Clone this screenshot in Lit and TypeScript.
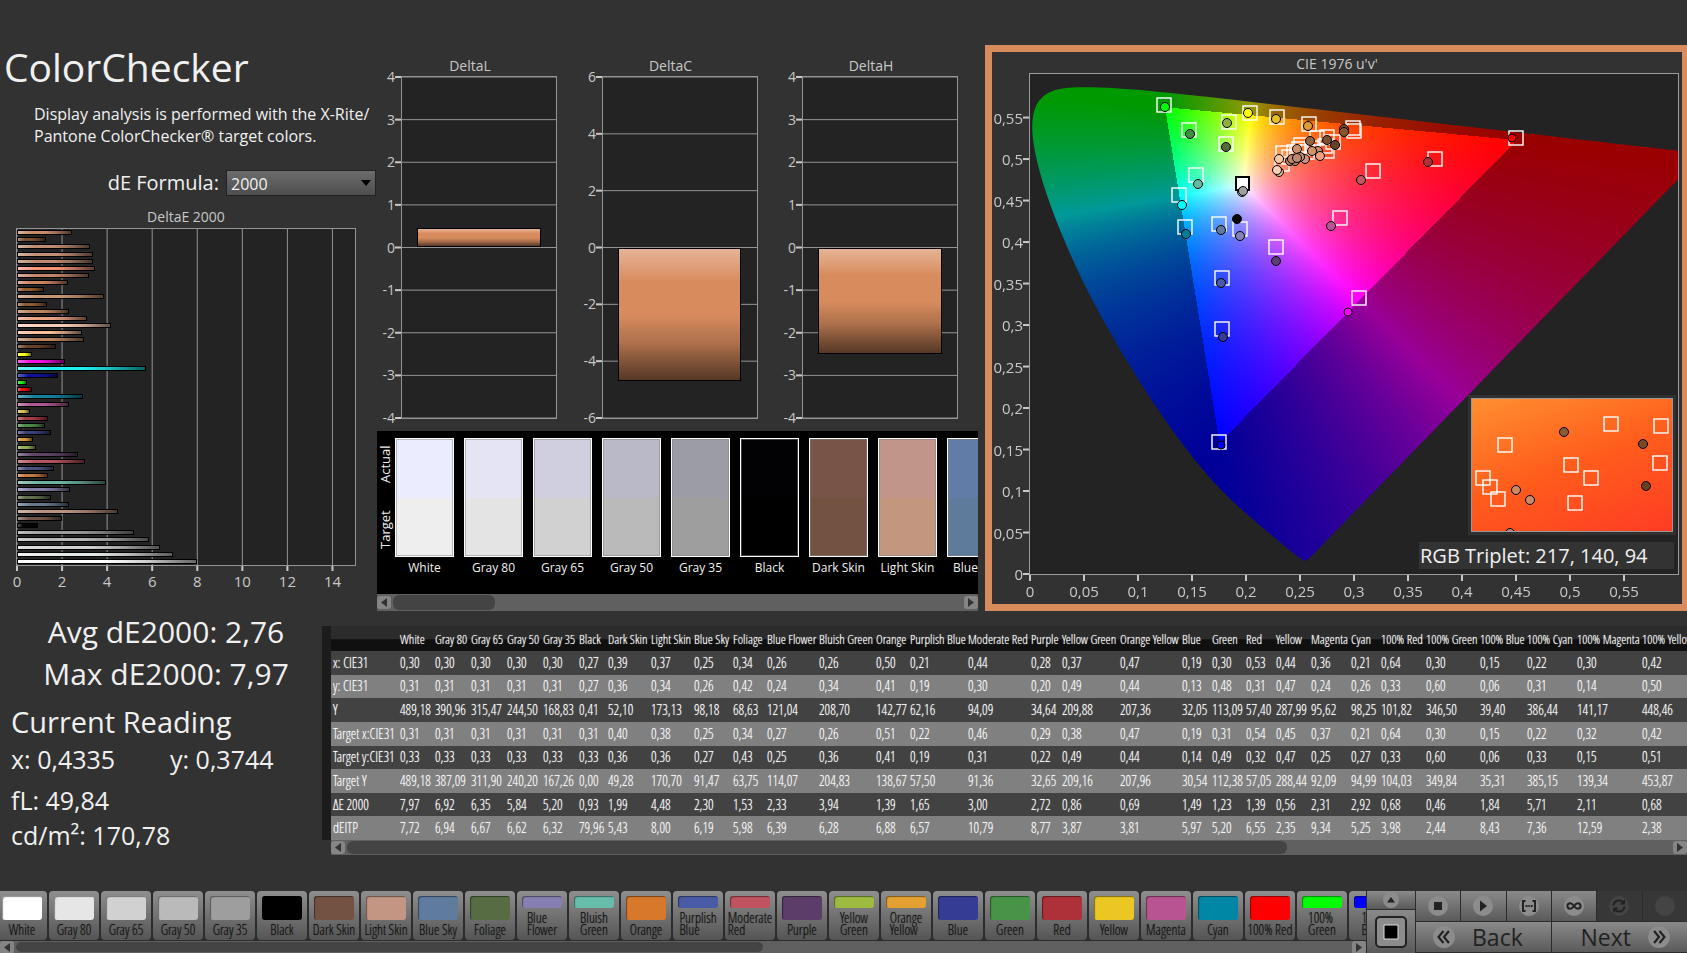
import { LitElement, html, svg, css } from "lit";
import { customElement, property } from "lit/decorators.js";
import { styleMap } from "lit/directives/style-map.js";
import { classMap } from "lit/directives/class-map.js";

interface Patch {
  name: string;
  color: string;
  width: number;
  values: string[];
}

const ROWS = ["x: CIE31", "y: CIE31", "Y", "Target x:CIE31", "Target y:CIE31", "Target Y", "ΔE 2000", "dEITP"];

const patch = (name: string, color: string, width: number, values: string): Patch => ({
  name, color, width, values: values.split(" "),
});

const PATCHES: Patch[] = [
  patch("White", "#ffffff", 35, "0,30 0,31 489,18 0,31 0,33 489,18 7,97 7,72"),
  patch("Gray 80", "#e6e6e6", 36, "0,30 0,31 390,96 0,31 0,33 387,09 6,92 6,94"),
  patch("Gray 65", "#d1d1d1", 36, "0,30 0,31 315,47 0,31 0,33 311,90 6,35 6,67"),
  patch("Gray 50", "#bababa", 36, "0,30 0,31 244,50 0,31 0,33 240,20 5,84 6,62"),
  patch("Gray 35", "#9e9e9e", 36, "0,30 0,31 168,83 0,31 0,33 167,26 5,20 6,32"),
  patch("Black", "#000000", 29, "0,27 0,27 0,41 0,31 0,33 0,00 0,93 79,96"),
  patch("Dark Skin", "#735244", 43, "0,39 0,36 52,10 0,40 0,36 49,28 1,99 5,43"),
  patch("Light Skin", "#c29682", 43, "0,37 0,34 173,13 0,38 0,36 170,70 4,48 8,00"),
  patch("Blue Sky", "#5f7b9e", 39, "0,25 0,26 98,18 0,25 0,27 91,47 2,30 6,19"),
  patch("Foliage", "#576c43", 34, "0,34 0,42 68,63 0,34 0,43 63,75 1,53 5,98"),
  patch("Blue Flower", "#8580b1", 52, "0,26 0,24 121,04 0,27 0,25 114,07 2,33 6,39"),
  patch("Bluish Green", "#67bdaa", 57, "0,26 0,34 208,70 0,26 0,36 204,83 3,94 6,28"),
  patch("Orange", "#d8782a", 34, "0,50 0,41 142,77 0,51 0,41 138,67 1,39 6,88"),
  patch("Purplish Blue", "#4a5ba5", 58, "0,21 0,19 62,16 0,22 0,19 57,50 1,65 6,57"),
  patch("Moderate Red", "#c15260", 63, "0,44 0,30 94,09 0,46 0,31 91,36 3,00 10,79"),
  patch("Purple", "#5c3d6a", 31, "0,28 0,20 34,64 0,29 0,22 32,65 2,72 8,77"),
  patch("Yellow Green", "#9dbb41", 58, "0,37 0,49 209,88 0,38 0,49 209,16 0,86 3,87"),
  patch("Orange Yellow", "#e4a030", 62, "0,47 0,44 207,36 0,47 0,44 207,96 0,69 3,81"),
  patch("Blue", "#343d93", 30, "0,19 0,13 32,05 0,19 0,14 30,54 1,49 5,97"),
  patch("Green", "#479449", 34, "0,30 0,48 113,09 0,31 0,49 112,38 1,23 5,20"),
  patch("Red", "#ae3039", 30, "0,53 0,31 57,40 0,54 0,32 57,05 1,39 6,55"),
  patch("Yellow", "#ebc723", 35, "0,44 0,47 287,99 0,45 0,47 288,44 0,56 2,35"),
  patch("Magenta", "#b95492", 40, "0,36 0,24 95,62 0,37 0,25 92,09 2,31 9,34"),
  patch("Cyan", "#0087a5", 30, "0,21 0,26 98,25 0,21 0,27 94,99 2,92 5,25"),
  patch("100% Red", "#ff0000", 45, "0,64 0,33 101,82 0,64 0,33 104,03 0,68 3,98"),
  patch("100% Green", "#00ff00", 54, "0,30 0,60 346,50 0,30 0,60 349,84 0,46 2,44"),
  patch("100% Blue", "#0000ff", 47, "0,15 0,06 39,40 0,15 0,06 35,31 1,84 8,43"),
  patch("100% Cyan", "#00ffff", 50, "0,22 0,31 386,44 0,22 0,33 385,15 5,71 7,36"),
  patch("100% Magenta", "#ff00ff", 65, "0,30 0,14 141,17 0,32 0,15 139,34 2,11 12,59"),
  patch("100% Yellow", "#ffff00", 65, "0,42 0,50 448,46 0,42 0,51 453,87 0,68 2,38"),
];

/* Names wider than this table column take two lines on a tile */
const ONE_LINE_LIMIT = 46;

const DELTA_E: Array<[number, string]> = [
  [2.44, "#c58a68"], [1.3, "#7a4e30"], [3.25, "#bd8b70"], [3.37, "#c08f74"], [3.37, "#b98a6c"],
  [3.47, "#f39276"], [3.2, "#c38668"], [2.28, "#c9875f"], [1.18, "#94592b"], [3.87, "#c4966f"],
  [1.35, "#8a5c38"], [2.32, "#ba8660"], [3.12, "#eba184"], [4.18, "#fbccb4"], [2.89, "#f8c09a"],
  [2.99, "#b98560"], [1.71, "#6a4028"], [0.68, "#ffff20"], [2.11, "#f010e0"], [5.71, "#20f0f0"],
  [1.84, "#10109c"], [0.46, "#20e820"], [0.68, "#e01010"], [2.92, "#12809a"], [2.31, "#ae5a92"],
  [0.56, "#d8be58"], [1.39, "#a83a42"], [1.23, "#4a8a4c"], [1.49, "#3a4078"], [0.69, "#d8963a"],
  [0.86, "#94ac5a"], [2.72, "#5f4468"], [3.0, "#b4525e"], [1.65, "#4a5484"], [1.39, "#c47a44"],
  [3.94, "#6cb09e"], [2.33, "#8680a8"], [1.53, "#5f6e4c"], [2.3, "#66788e"], [4.48, "#b8907c"],
  [1.99, "#72564c"], [0.93, "#050505"], [5.2, "#9a9a9a"], [5.84, "#b6b6b6"], [6.35, "#d2d0d2"],
  [6.92, "#e4e8e6"], [7.97, "#ffffff"],
];

const PLOT_W = 648;
const PLOT_H = 500;
const U_MAX = 0.6;
const V_MAX = 0.6025;

const TARGETS: Array<[number, number]> = [
  [134, 31], [159, 56], [199, 48], [196, 70], [220, 39], [247, 43], [279, 50], [166, 101],
  [149, 121], [155, 153], [189, 150], [210, 155], [246, 173], [192, 204], [192, 255], [189, 368],
  [486, 64], [405, 85], [343, 97], [310, 144], [329, 224], [323, 54], [324, 57], [303, 68],
  [297, 63], [287, 64], [271, 71], [253, 79], [252, 90], [259, 83], [264, 78], [269, 75],
  [277, 78], [282, 74], [297, 77], [295, 72],
];

const READINGS: Array<[number, number, string, number?]> = [
  [135, 33, "#00ff00"], [160, 60, "#3f9142"], [197, 49, "#8fae3e"], [196, 73, "#566b3a"],
  [218, 39, "#ffff00"], [246, 45, "#e5c020"], [278, 52, "#dd9e2f"], [168, 110, "#65baa4"],
  [152, 131, "#00ffff"], [156, 160, "#008099"], [191, 156, "#5f7ba0"], [210, 162, "#8580b5"],
  [246, 187, "#5c3f70"], [191, 209, "#4a5aa8"], [193, 263, "#343d97"], [191, 371, "#0000ff", 4],
  [212, 118, "#d0d0d0"], [213, 117, "#a0a0a0"], [207, 145, "#000000"], [482, 64, "#ff0000", 4],
  [398, 88, "#b03038"], [331, 106, "#c25664"], [301, 152, "#b9569a"], [318, 238, "#ff00ff", 4],
  [314, 55, "#7a4a24"], [314, 58, "#8a5528"], [280, 67, "#94643c"], [297, 66, "#7b5030"],
  [305, 71, "#6a4028"], [267, 75, "#c9946c"], [288, 77, "#c98b62"], [282, 77, "#d0936b"],
  [290, 82, "#f0a080"], [275, 85, "#d0927a"], [270, 83, "#c89078"], [260, 87, "#b88468"],
  [265, 87, "#b88468"], [262, 85, "#c08a70"], [267, 84, "#c08a70"], [249, 85, "#f8c8a4"],
  [249, 98, "#e8b898"], [247, 96, "#f8d0b8"],
];

const INSET_TARGETS: Array<[number, number]> = [
  [33, 46], [139, 25], [189, 27], [99, 66], [188, 64], [119, 79], [11, 79], [18, 88], [26, 100], [103, 104],
];

const INSET_READINGS: Array<[number, number, string]> = [
  [92, 33, "#8a5c34"], [171, 45, "#774b29"], [174, 87, "#6a3f24"], [44, 91, "#cc8a62"],
  [58, 101, "#c98b68"], [38, 134, "#c08060"],
];

/* Spectral locus, CIE 1931 x,y */
const LOCUS: Array<[number, number]> = [
  [0.1741, 0.005], [0.1733, 0.0048], [0.1714, 0.0051], [0.1689, 0.0069], [0.1644, 0.0109],
  [0.1566, 0.0177], [0.144, 0.0297], [0.1355, 0.0399], [0.1241, 0.0578], [0.1096, 0.0868],
  [0.0913, 0.1327], [0.0687, 0.2007], [0.0454, 0.295], [0.0235, 0.4127], [0.0082, 0.5384],
  [0.0039, 0.6548], [0.0139, 0.7502], [0.0389, 0.812], [0.0743, 0.8338], [0.1142, 0.8262],
  [0.1547, 0.8059], [0.1929, 0.7816], [0.2296, 0.7543], [0.3016, 0.6923], [0.3731, 0.6245],
  [0.4441, 0.5547], [0.5125, 0.4866], [0.5752, 0.4242], [0.627, 0.3725], [0.6658, 0.334],
  [0.6915, 0.3083], [0.719, 0.2809], [0.7347, 0.2653],
];

const pct = (value: number, total: number) => `${(value / total) * 100}%`;
const comma = (value: number) => String(Math.round(value * 100) / 100).replace(".", ",");
const barFill = (direction: string, color: string) =>
  `linear-gradient(${direction}, color-mix(in srgb, ${color} 65%, #fff), ${color} 25%, ${color} 50%, color-mix(in srgb, ${color} 80%, #000) 72%, color-mix(in srgb, ${color} 40%, #000))`;

const drawMarkers = (
  targets: Array<[number, number]>,
  readings: Array<[number, number, string, number?]>,
  width: number,
  height: number,
) => svg`
  ${targets.map(([x, y]) => svg`<rect class="target" x=${pct(x, width)} y=${pct(y, height)} width="14" height="14" transform="translate(-7 -7)"></rect>`)}
  ${readings.map(([x, y, color, r]) => svg`<circle class="reading" cx=${pct(x, width)} cy=${pct(y, height)} r=${r ?? 4.5} fill=${color}></circle>`)}
`;

@customElement("scroll-strip")
class ScrollStrip extends LitElement {
  @property({ type: Number }) extent = 20;

  static styles = css`
    :host { display: flex; align-items: center; background: #606060; height: 15px; }
    .arrow { display: grid; place-items: center; width: 14px; height: 13px; padding: 0; border: 0; border-radius: 3px; background: #858585; flex: none; }
    .arrow svg { width: 6px; height: 9px; fill: #333; }
    .track { flex: 1; height: 100%; margin: 0 2px; padding: 1px 0; box-sizing: border-box; }
    .thumb { height: 100%; border-radius: 6px; background: #444; }
  `;

  render() {
    return html`
      <button class="arrow" aria-label="Scroll left"><svg viewBox="0 0 6 9"><path d="M6 0v9L0 4.5z"/></svg></button>
      <div class="track"><div class="thumb" style=${styleMap({ width: `${this.extent}%` })}></div></div>
      <button class="arrow" aria-label="Scroll right"><svg viewBox="0 0 6 9"><path d="M0 0v9l6-4.5z"/></svg></button>
    `;
  }
}

@customElement("delta-chart")
class DeltaChart extends LitElement {
  @property() heading = "";
  @property({ type: Number }) limit = 4;
  @property({ type: Number }) step = 1;
  @property({ type: Number }) value = 0;

  static styles = css`
    :host { display: block; color: #c8c8c8; font-size: 14px; }
    .title { margin: 0 0 0 -18px; font-size: 14px; font-weight: 400; line-height: 20px; text-align: center; }
    .plot { position: relative; height: 343px; border: 1px solid #949494; background: #232323; box-sizing: border-box; }
    .axes { display: block; width: 100%; height: 100%; overflow: visible; }
    .axes text { fill: #c8c8c8; text-anchor: end; }
    .grid { stroke: #949494; stroke-width: 1; }
    .tick { stroke: #c8c8c8; stroke-width: 2; }
    .bar { position: absolute; left: 10%; width: 80%; border: 1px solid #000; box-sizing: border-box; }
  `;

  render() {
    const ticks: number[] = [];
    for (let t = this.limit; t >= -this.limit; t -= this.step) ticks.push(t);
    const top = 50 - (Math.max(this.value, 0) / this.limit) * 50;
    const size = (Math.abs(this.value) / this.limit) * 50;
    return html`
      <h3 class="title">${this.heading}</h3>
      <div class="plot">
        <svg class="axes">
          ${ticks.map((t) => {
            const y = `${50 - (t / this.limit) * 50}%`;
            return svg`
              <line class="grid" x1="0" x2="100%" y1=${y} y2=${y}></line>
              <line class="tick" x1="-7" x2="-1" y1=${y} y2=${y}></line>
              <text x="-7" y=${y} dy="5">${t}</text>`;
          })}
        </svg>
        <div class="bar" style=${styleMap({ top: `${top}%`, height: `${size}%`, background: barFill("180deg", "#d88c5e") })}></div>
      </div>
    `;
  }
}

@customElement("chroma-plot")
class ChromaPlot extends LitElement {
  static styles = css`
    :host { display: block; border: 7px solid #d88c5e; border-right-width: 5px; padding: 0 4px 30px 38px; color: #c8c8c8; background: #323232; }
    .title { margin: 0 0 0 -34px; font-size: 14px; font-weight: 400; line-height: 24px; height: 22px; text-align: center; }
    .plot { position: relative; height: 500px; background: #232323; outline: 1px solid #9a9a9a; }
    .gamut { display: block; width: 100%; height: 100%; }
    .marks { position: absolute; inset: 0; width: 100%; height: 100%; overflow: visible; }
    .axis { fill: #c8c8c8; font-size: 15px; }
    .vertical { text-anchor: end; }
    .horizontal { text-anchor: middle; }
    .tick { stroke: #c8c8c8; stroke-width: 2; }
    .target { fill: none; stroke: #fff; stroke-width: 1.4; }
    .white { fill: #fff; stroke: #000; stroke-width: 2; }
    .reading { stroke: #000; stroke-width: 1; }
    .inset { position: absolute; right: 5px; bottom: 42px; width: 200px; height: 132px; border: 1px solid #999; outline: 3px solid #303030; overflow: hidden;
      background: linear-gradient(160deg, #ff8f30, #ff5c1c 50%, #ff3c24); }
    .inset svg { display: block; width: 100%; height: 100%; }
    .triplet { position: absolute; right: 4px; bottom: 5px; width: 255px; padding: 0 1px; box-sizing: border-box; background: #333; color: #f0f0f0; font-size: 20px; line-height: 27px; }
  `;

  firstUpdated() {
    const canvas = this.renderRoot.querySelector("canvas") as HTMLCanvasElement;
    const w = Math.max(canvas.clientWidth, 100);
    const h = Math.max(canvas.clientHeight, 100);
    canvas.width = w;
    canvas.height = h;
    const layer = document.createElement("canvas");
    layer.width = w;
    layer.height = h;
    const ctx = layer.getContext("2d")!;
    const image = ctx.createImageData(w, h);
    for (let j = 0; j < h; j++) {
      for (let i = 0; i < w; i++) {
        const u = ((i + 0.5) / w) * U_MAX;
        const v = Math.max((1 - (j + 0.5) / h) * V_MAX, 0.002);
        const X = (9 * u) / (4 * v);
        const Z = (12 - 3 * u - 20 * v) / (4 * v);
        const rgb = [
          3.2406 * X - 1.5372 - 0.4986 * Z,
          -0.9689 * X + 1.8758 + 0.0415 * Z,
          0.0557 * X - 0.204 + 1.057 * Z,
        ];
        const level = Math.min(...rgb) >= 0 ? 255 : 153;
        const peak = Math.max(...rgb);
        const at = (j * w + i) * 4;
        rgb.forEach((c, k) => { image.data[at + k] = (level * Math.max(c, 0)) / peak; });
        image.data[at + 3] = 255;
      }
    }
    ctx.putImageData(image, 0, 0);

    const out = canvas.getContext("2d")!;
    const points = LOCUS.map(([x, y]) => {
      const d = -2 * x + 12 * y + 3;
      return [((4 * x) / d / U_MAX) * w, (1 - (9 * y) / d / V_MAX) * h];
    });
    out.beginPath();
    out.moveTo(points[0][0], points[0][1]);
    for (let i = 1; i < points.length - 1; i++) {
      const [x, y] = points[i];
      const [nx, ny] = points[i + 1];
      out.quadraticCurveTo(x, y, (x + nx) / 2, (y + ny) / 2);
    }
    const last = points[points.length - 1];
    out.lineTo(last[0], last[1]);
    out.closePath();
    out.fillStyle = out.createPattern(layer, "no-repeat")!;
    out.fill();
  }

  render() {
    const steps = Array.from({ length: 12 }, (_, i) => i * 0.05);
    return html`
      <h3 class="title">CIE 1976 u'v'</h3>
      <div class="plot">
        <canvas class="gamut"></canvas>
        <svg class="marks">
          ${steps.map((s) => {
            const x = pct(s, U_MAX);
            const y = pct(V_MAX - s, V_MAX);
            return svg`
              <line class="tick" x1="-7" x2="-1" y1=${y} y2=${y}></line>
              <text class="axis vertical" x="-7" y=${y} dy="6">${comma(s)}</text>
              <svg x=${x} y="100%" overflow="visible">
                <line class="tick" y1="1" y2="7"></line>
                <text class="axis horizontal" y="23">${comma(s)}</text>
              </svg>`;
          })}
          ${drawMarkers(TARGETS, [], PLOT_W, PLOT_H)}
          <rect class="white" x=${pct(213, PLOT_W)} y=${pct(110, PLOT_H)} width="13" height="13" transform="translate(-7 -7)"></rect>
          ${drawMarkers([], READINGS, PLOT_W, PLOT_H)}
        </svg>
        <div class="inset"><svg>${drawMarkers(INSET_TARGETS, INSET_READINGS, 200, 132)}</svg></div>
        <div class="triplet">RGB Triplet: 217, 140, 94</div>
      </div>
    `;
  }
}

@customElement("app-root")
class AppRoot extends LitElement {
  static styles = css`
    :host { display: flex; flex-direction: column; min-height: 100vh; overflow: hidden; box-sizing: border-box; padding-top: 45px;
      background: #323232; color: #f0f0f0; font-family: "Open Sans", "Noto Sans", sans-serif; }
    h1, h2, p { margin: 0; font-weight: 400; }
    .upper { display: grid; grid-template-columns: 376px 602px minmax(0, 1fr); }
    .side { padding-right: 20px; }
    .heading { padding-left: 4px; font-size: 39px; line-height: 44px; }
    .about { margin-top: 14px; padding-left: 34px; font-size: 16px; line-height: 22px; white-space: nowrap; }
    .formula { display: flex; justify-content: flex-end; align-items: center; gap: 7px; margin: 22px -20px 0 0; font-size: 20px; line-height: 28px; }
    .select { width: 150px; height: 26px; padding: 2px 4px 0; border: 1px solid #222; border-radius: 0; appearance: none; color: #f0f0f0; font: 16px "Open Sans", sans-serif;
      background: linear-gradient(#6c6c6c, #4e4e4e); }
    .picker { position: relative; display: flex; }
    .caret { position: absolute; right: 5px; top: 10px; width: 10px; height: 6px; fill: #000; pointer-events: none; }
    .bars-title { margin: 10px 0 0 16px; color: #c8c8c8; font-size: 14px; line-height: 20px; text-align: center; }
    .bars { position: relative; height: 338px; margin: 1px 0 0 16px; border: 1px solid #949494; background: #232323; box-sizing: border-box; }
    .bars-axes { position: absolute; inset: 0; width: 100%; height: 100%; overflow: visible; }
    .bars-axes text { fill: #c8c8c8; font-size: 15px; text-anchor: middle; }
    .grid { stroke: #949494; stroke-width: 1; }
    .tick { stroke: #c8c8c8; stroke-width: 2; }
    .bar-list { position: relative; display: grid; grid-template-rows: repeat(47, 1fr); align-items: center; height: 100%; }
    .bar { height: 5px; border: 1px solid #000; box-sizing: border-box; }

    .middle { padding: 11px 0 0; display: flex; flex-direction: column; }
    .deltas { display: grid; grid-template-columns: repeat(3, 156px); justify-content: space-between; padding: 0 20px 0 25px; }
    .compare { display: flex; height: 163px; margin: 12px 0 0 1px; background: #000; font-size: 12px; overflow: hidden; box-sizing: border-box; }
    .compare-axis { display: flex; flex-direction: row-reverse; justify-content: space-around; flex: none; height: 132px; width: 18px; writing-mode: vertical-rl; transform: rotate(180deg); text-align: center; line-height: 17px; font-size: 13px; }
    .compare-list { display: flex; gap: 10px; padding-top: 7px; }
    .compare-item { flex: none; width: 59px; text-align: center; line-height: 22px; white-space: nowrap; }
    .pair { display: grid; grid-template-rows: 1fr 1fr; height: 119px; border: 1px solid #fff; box-sizing: border-box; outline: 1px solid rgba(128,128,128,.5); outline-offset: -2px; }
    .strip-scroll { margin-left: 1px; height: 17px; }
    .gamut-panel { margin-left: 7px; }

    .lower { display: grid; grid-template-columns: 322px minmax(0, 1fr); align-items: start; }
    .stats { padding-right: 8px; }
    .stat { font-size: 30px; line-height: 42px; padding-left: 18px; text-align: center; }
    .reading-title { margin-top: 7px; padding-left: 11px; font-size: 29px; line-height: 40px; }
    .line { display: flex; padding-left: 11px; font-size: 25px; line-height: 35px; }
    .line.first { margin-bottom: 6px; }
    .line span { flex: 0 0 159px; white-space: nowrap; }
    .data { margin-top: 15px; min-width: 0; overflow: hidden; }
    .table { width: 1385px; height: 214px; table-layout: fixed; border-collapse: separate; border-spacing: 0; border-left: 9px solid #1c1c1c; color: #fff; text-shadow: 0 0 1px #c0c0c0;
      font: 14px "Open Sans Condensed Light", "Noto Sans Condensed", "Liberation Sans Narrow", "Open Sans", sans-serif; }
    .table th, .table td { padding: 0; font-weight: 400; text-align: left; white-space: nowrap; line-height: 20px; }
    .table thead th { height: 25px; font-size: 13px; }
    .table thead { background: linear-gradient(#2c2c2c 50%, #101010 55%); }
    .table tbody tr { background: #424242; }
    .table tbody tr:nth-child(even) { background: #808080; }
    .table tbody th { padding-left: 2px; }
    .data-scroll { margin-left: 9px; }

    .dock { display: grid; grid-template-columns: minmax(0, 1fr) 48px 271px; column-gap: 1px; height: 62px; margin-top: auto; background: #2c2c2c; }
    .tiles { display: flex; flex-direction: column; overflow: hidden; }
    .tile-row { display: flex; gap: 2px; margin-left: -3px; height: 49px; }
    .tile { flex: none; display: flex; flex-direction: column; align-items: center; width: 50px; height: 49px; padding: 5px 0 4px; border: 0; border-radius: 4px; background: linear-gradient(#8e8e8e, #555); color: #101010; overflow: hidden; white-space: nowrap;
      text-shadow: 0 0 1px #303030; font: 14px/12px "Open Sans Condensed Light", "Noto Sans Condensed", "Liberation Sans Narrow", "Open Sans", sans-serif; }
    .two-line { width: min-content; white-space: normal; text-align: left; }
    .chip { flex: 1; width: 40px; min-height: 12px; margin-bottom: 4px; border-radius: 3px; box-shadow: inset 1px 1px 1px rgba(0,0,0,.45); }
    .tile-scroll { height: 12px; margin-top: 1px; }
    .window { display: grid; grid-template-rows: 18px 1fr; gap: 1px; }
    .ctl { display: flex; align-items: center; justify-content: center; padding: 0; border: 0; background: linear-gradient(#8a8a8a, #5a5a5a); color: #222; font: 23px "Open Sans", sans-serif; }
    .ctl.off { background: #373737; }
    .ctl svg { width: 22px; height: 22px; }
    .knob { fill: #8c8c8c; }
    .off .knob { fill: #444; }
    .ink { fill: #222; }
    .pen { fill: none; stroke: #222; stroke-width: 2; }
    .panel svg { width: 34px; height: 34px; }
    .nav { display: grid; grid-template-columns: repeat(6, 1fr); grid-template-rows: 30px 30px; gap: 1px; }
    .wide { grid-column: span 3; gap: 16px; padding: 0 16px; }
    .wide.back { justify-content: flex-start; }
    .wide.next { justify-content: flex-end; }
    .wide svg { width: 24px; height: 24px; }
  `;

  private renderCompare() {
    const actual = ["#ececff", "#e5e4f5", "#d0cfdf", "#b9b9c8", "#9c9ca6", "#020204", "#775447", "#c2958a", "#617ca6"];
    const target = ["#eeeeee", "#e4e4e4", "#d1d1d1", "#bababa", "#9e9e9e", "#000000", "#735242", "#c2967f", "#5f7b9b"];
    return html`
      <div class="compare">
        <div class="compare-axis"><span>Actual</span><span>Target</span></div>
        <div class="compare-list">
          ${actual.map((color, i) => html`
            <div class="compare-item">
              <div class="pair">
                <div style=${styleMap({ background: color })}></div>
                <div style=${styleMap({ background: target[i] })}></div>
              </div>
              ${PATCHES[i].name}
            </div>`)}
        </div>
      </div>`;
  }

  private renderBars() {
    return html`
      <p class="bars-title">DeltaE 2000</p>
      <div class="bars">
        <svg class="bars-axes">
          ${[0, 2, 4, 6, 8, 10, 12, 14].map((t) => {
            const x = pct(t, 15);
            return svg`
              <line class="grid" x1=${x} x2=${x} y1="0" y2="100%"></line>
              <svg x=${x} y="100%" overflow="visible">
                <line class="tick" y1="1" y2="6"></line>
                <text y="22">${t}</text>
              </svg>`;
          })}
        </svg>
        <div class="bar-list">
          ${DELTA_E.map(([value, color]) => html`
            <div class="bar" style=${styleMap({ width: pct(value, 15), background: barFill("90deg", color) })}></div>`)}
        </div>
      </div>`;
  }

  private renderTable() {
    return html`
      <div class="data">
        <table class="table">
          <colgroup>
            <col style=${styleMap({ width: "69px" })}>
            ${PATCHES.map((p) => html`<col style=${styleMap({ width: `${p.width}px` })}>`)}
          </colgroup>
          <thead><tr><th></th>${PATCHES.map((p) => html`<th scope="col">${p.name}</th>`)}</tr></thead>
          <tbody>
            ${ROWS.map((row, i) => html`
              <tr><th scope="row">${row}</th>${PATCHES.map((p) => html`<td>${p.values[i]}</td>`)}</tr>`)}
          </tbody>
        </table>
        <scroll-strip class="data-scroll" extent="71"></scroll-strip>
      </div>`;
  }

  private renderDock() {
    const knob = svg`<circle class="knob" cx="11" cy="11" r="10"></circle>`;
    const controls = [
      { label: "Stop", off: false, icon: svg`<path class="ink" d="M7 7h8v8H7z"/>` },
      { label: "Play", off: false, icon: svg`<path class="ink" d="M8 5.500v11l7-5.500z"/>` },
      { label: "Step", off: false, icon: svg`<path class="pen" d="M7.500 6H5v10h2.500M14.500 6H17v10h-2.500M7.500 11h2M10.300 11h1.500M12.700 11h2"/>` },
      { label: "Loop", off: false, icon: svg`<path class="pen" d="M11 11c-1.500-2-2.500-2.800-3.800-2.800a2.800 2.800 0 0 0 0 5.600C8.500 13.800 9.500 13 11 11s2.500-2.800 3.800-2.800a2.800 2.800 0 0 1 0 5.600C13.500 13.800 12.500 13 11 11z"/>` },
      { label: "Refresh", off: true, icon: svg`<path class="pen" d="M5.500 10.500a5.500 5.500 0 0 1 9.500-3.300M16.500 11.500a5.500 5.500 0 0 1-9.500 3.300"/><path class="ink" d="M17 4v5.500h-5.500zM5 18v-5.500h5.500z"/>` },
      { label: "Record", off: true, icon: svg`` },
    ];
    return html`
      <footer class="dock">
        <div class="tiles">
          <div class="tile-row">
            ${PATCHES.slice(0, 27).map((p) => html`
              <button class="tile">
                <span class="chip" style=${styleMap({ background: p.color })}></span>
                <span class=${classMap({ "two-line": p.width > ONE_LINE_LIMIT })}>${p.name}</span>
              </button>`)}
          </div>
          <scroll-strip class="tile-scroll" extent="56"></scroll-strip>
        </div>
        <div class="window">
          <button class="ctl" aria-label="Expand"><svg viewBox="0 0 22 22"><circle class="knob" cx="11" cy="11" r="8"/><path class="ink" d="M7 13.500h8L11 8z"/></svg></button>
          <button class="ctl panel" aria-label="Pattern window"><svg viewBox="0 0 34 34"><rect x="2" y="2" width="30" height="30" rx="4" fill="#8c8c8c" stroke="#222" stroke-width="2"/><path d="M10 10h14v14H10z" fill="#000" stroke="#ddd"/></svg></button>
        </div>
        <div class="nav">
          ${controls.map((c) => html`
            <button class=${classMap({ ctl: true, off: c.off })} aria-label=${c.label} ?disabled=${c.off}><svg viewBox="0 0 22 22">${knob}${c.icon}</svg></button>`)}
          <button class="ctl wide back"><svg viewBox="0 0 22 22">${knob}<path class="pen" d="M10.500 5.500 6 11l4.500 5.500M15.500 5.500 11 11l4.500 5.500"/></svg>Back</button>
          <button class="ctl wide next">Next<svg viewBox="0 0 22 22">${knob}<path class="pen" d="M6.500 5.500 11 11l-4.500 5.500M11.500 5.500 16 11l-4.500 5.500"/></svg></button>
        </div>
      </footer>`;
  }

  render() {
    return html`
      <section class="upper">
        <div class="side">
          <h1 class="heading">ColorChecker</h1>
          <p class="about">Display analysis is performed with the X-Rite/<br>Pantone ColorChecker® target colors.</p>
          <div class="formula">
            <label for="formula">dE Formula:</label>
            <div class="picker">
              <select id="formula" class="select"><option>2000</option></select>
              <svg class="caret" viewBox="0 0 10 6"><path d="M0 0h10L5 6z"/></svg>
            </div>
          </div>
          ${this.renderBars()}
        </div>
        <div class="middle">
          <div class="deltas">
            <delta-chart heading="DeltaL" limit="4" step="1" value="0.45"></delta-chart>
            <delta-chart heading="DeltaC" limit="6" step="2" value="-4.71"></delta-chart>
            <delta-chart heading="DeltaH" limit="4" step="1" value="-2.5"></delta-chart>
          </div>
          ${this.renderCompare()}
          <scroll-strip class="strip-scroll" extent="18"></scroll-strip>
        </div>
        <chroma-plot class="gamut-panel"></chroma-plot>
      </section>
      <section class="lower">
        <div class="stats">
          <p class="stat">Avg dE2000: 2,76</p>
          <p class="stat">Max dE2000: 7,97</p>
          <h2 class="reading-title">Current Reading</h2>
          <p class="line first"><span>x: 0,4335</span><span>y: 0,3744</span></p>
          <p class="line">fL: 49,84</p>
          <p class="line">cd/m²: 170,78</p>
        </div>
        ${this.renderTable()}
      </section>
      ${this.renderDock()}
    `;
  }
}
